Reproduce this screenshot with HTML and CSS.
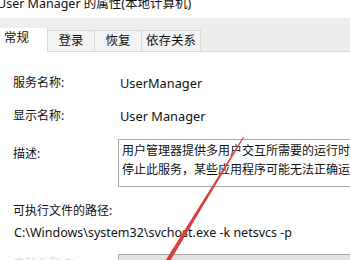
FILE: index.html
```html
<!DOCTYPE html>
<html lang="zh-CN">
<head>
    <meta charset="UTF-8">
    <title>User Manager 的属性</title>
    <link rel="stylesheet" href="styles.css">
</head>
<body>
    <div class="title">User Manager 的属性(本地计算机)</div>
    <div class="tabs">
        <div class="tab active">常规</div>
        <div class="tab">登录</div>
        <div class="tab">恢复</div>
        <div class="tab wide">依存关系</div>
    </div>
    <div class="content">
        <div class="row">
            <div class="label">服务名称:</div>
            <div class="value">UserManager</div>
        </div>
        <div class="row">
            <div class="label">显示名称:</div>
            <div class="value">User Manager</div>
        </div>
        <div class="row desc-row">
            <div class="label desc-label">描述:</div>
            <div class="desc-box">用户管理器提供多用户交互所需要的运行时组件。如果<br>停止此服务，某些应用程序可能无法正确运行。</div>
        </div>
        <div class="path-label">可执行文件的路径:</div>
        <div class="path">C:\Windows\system32\svchost.exe -k netsvcs -p</div>
        <div class="row start-row">
            <div class="label faint">启动类型(E):</div>
            <div class="select-box"></div>
        </div>
    </div>
    <svg class="arrow" width="350" height="260" viewBox="0 0 350 260">
        <polygon points="243,137 244.3,137 169.5,262 164.5,262" fill="#d6403e"/>
    </svg>
</body>
</html>
```

FILE: styles.css
```css
body, html {
    margin: 0;
    padding: 0;
    width: 100%;
    height: 100%;
    overflow: hidden;
    background: #fff;
}
body {
    position: relative;
    font-family: "Noto Sans", "Noto Sans CJK SC", sans-serif;
    font-size: 12px;
    color: #111;
}
.title {
    height: 18px;
    line-height: 12px;
    margin-top: -2px;
    margin-left: -3px;
    font-size: 12.5px;
    white-space: nowrap;
}
.tabs {
    height: 34px;
    margin-top: 2px;
    background: #eeeeee;
    border-bottom: 1px solid #d9d9d9;
    display: flex;
    align-items: flex-end;
    box-sizing: border-box;
}
.tab {
    width: 47px;
    height: 21px;
    line-height: 20px;
    text-align: center;
    background: #f3f3f3;
    border: 1px solid #d9d9d9;
    border-bottom: none;
    border-left: none;
    box-sizing: border-box;
    font-size: 12.5px;
}
.tab.active {
    width: 48px;
    height: 24px;
    line-height: 20px;
    background: #fff;
    margin-bottom: -1px;
    border-top: none;
    text-align: left;
    padding-left: 4px;
}
.tab.wide {
    width: 59px;
}
.content {
    padding: 23px 0 0 13px;
    line-height: 16px;
}
.row {
    display: grid;
    grid-template-columns: 105px 1fr;
    margin-bottom: 17px;
}
.value {
    padding-left: 2px;
    white-space: nowrap;
    font-size: 12.8px;
}
.desc-row {
    margin-top: -2px;
    margin-bottom: 16px;
}
.desc-label {
    margin-top: 7px;
}
.desc-box {
    height: 48px;
    box-sizing: border-box;
    border: 1px solid #a8a8a8;
    border-right: none;
    padding: 1px 0 0 3px;
    line-height: 19px;
    width: 320px;
    white-space: nowrap;
    overflow: hidden;
}
.path-label {
    margin-bottom: 6px;
}
.path {
    padding-left: 1px;
    white-space: nowrap;
    font-size: 12.5px;
    margin-bottom: 13px;
}
.start-row {
    margin-bottom: 0;
}
.faint {
    color: #d6d6d6;
    margin-top: 2px;
}
.select-box {
    height: 24px;
    background: #e4e4e4;
    border: 1px solid #adadad;
    border-right: none;
}
.arrow {
    position: absolute;
    top: 0;
    left: 0;
    pointer-events: none;
}
```
